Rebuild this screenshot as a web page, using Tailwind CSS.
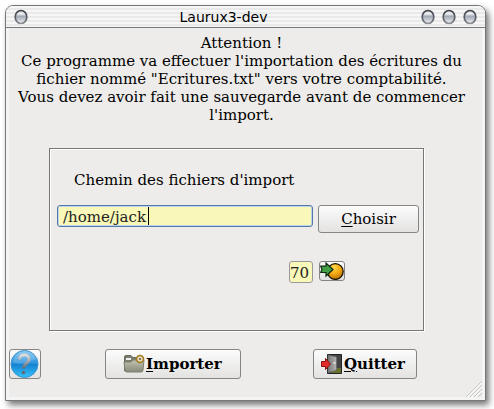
<!DOCTYPE html>
<html lang="fr">
<head>
<meta charset="utf-8">
<title>Laurux3-dev</title>
<script src="https://cdn.jsdelivr.net/npm/@tailwindcss/browser@4"></script>
</head>
<body class="bg-white min-h-screen pt-[5px] pl-[5px] pr-2 pb-2 flex flex-col font-['DejaVu_Serif',serif] text-[15px] leading-[18px] text-black">
<svg class="absolute w-0 h-0" aria-hidden="true">
  <defs>
    <linearGradient id="orbRing" x1="0" y1="0" x2="0" y2="1"><stop offset="0" stop-color="#40444c"/><stop offset=".6" stop-color="#5c6068"/><stop offset="1" stop-color="#8b8d91"/></linearGradient>
    <linearGradient id="orbFill" x1="0" y1="0" x2="0" y2="1"><stop offset="0" stop-color="#c9ccd2"/><stop offset=".25" stop-color="#f0f2f5"/><stop offset=".45" stop-color="#a4aab6"/><stop offset="1" stop-color="#edf1f6"/></linearGradient>
    <symbol id="orb" viewBox="0 0 14 16"><ellipse cx="7" cy="8.5" rx="6.6" ry="7.2" fill="#fff" opacity=".8"/><ellipse cx="7" cy="8" rx="5.8" ry="6.5" fill="url(#orbFill)" stroke="url(#orbRing)" stroke-width="1.7"/></symbol>
  </defs>
</svg>
<main class="flex-1 flex flex-col rounded-t-lg border border-[#777] bg-[#f4f4f4] shadow-[3px_4px_6px_#00000088]">
  <header class="h-[22px] shrink-0 flex items-center rounded-t-[7px] border-b border-[#777] px-2 bg-[repeating-linear-gradient(to_bottom,#f6f6f6_0px,#f6f6f6_2px,#e9e9e9_2px,#e9e9e9_4px)]">
    <div class="w-14 flex"><button aria-label="Menu" class="w-[14px] h-4"><svg class="w-[14px] h-4"><use href="#orb"/></svg></button></div>
    <h1 class="flex-1 text-center font-['DejaVu_Sans',sans-serif] text-[14px] leading-5 pr-11">Laurux3-dev</h1>
    <div class="flex gap-[7px]">
      <button aria-label="Réduire" class="w-[14px] h-4"><svg class="w-[14px] h-4"><use href="#orb"/></svg></button>
      <button aria-label="Agrandir" class="w-[14px] h-4"><svg class="w-[14px] h-4"><use href="#orb"/></svg></button>
      <button aria-label="Fermer" class="w-[14px] h-4"><svg class="w-[14px] h-4"><use href="#orb"/></svg></button>
    </div>
  </header>
  <section class="relative flex-1 flex flex-col mx-[3px] mb-[3px] bg-[#edecea] pt-[6px] pb-[18px]">
    <p class="text-center pr-2">Attention !<br>Ce programme va effectuer l'importation des écritures du<br>fichier nommé "Ecritures.txt" vers votre comptabilité.<br>Vous devez avoir fait une sauvegarde avant de commencer<br>l'import.</p>
    <div class="flex-1 mt-6 ml-10 mr-[58px] border border-[#777] shadow-[inset_1px_1px_0_#fff,1px_1px_0_#fff] pl-[7px] pr-1 pt-[22px]">
      <label for="path" class="block pl-[17px]">Chemin des fichiers d'import</label>
      <div class="mt-4 flex items-start gap-[5px]">
        <div class="relative flex-1 min-w-0">
          <input id="path" value="/home/jack" class="block w-full h-[22px] rounded-[3px] border border-[#5479a9] bg-[#f9f8b8] pl-[5px] pt-[2px] shadow-[inset_0_0_0_1px_#bcd4ec] text-[#222] outline-none">
          <span class="absolute left-[91px] top-[2px] w-px h-[18px] bg-black"></span>
        </div>
        <button class="w-[101px] h-7 rounded-[3px] border border-[#858585] bg-linear-to-b from-[#fcfcfc] to-[#e3e2e1]"><span class="underline underline-offset-2">C</span>hoisir</button>
      </div>
      <div class="mt-7 flex items-start gap-[6px] pl-[232px]">
        <input aria-label="Code" value="70" class="w-6 h-[22px] rounded-[3px] border border-[#999] bg-[#f9f8b8] pl-0 pt-px text-[#222] outline-none">
        <button aria-label="Exécuter" class="w-[26px] h-5 rounded-[3px] border border-[#858585] bg-linear-to-b from-[#fcfcfc] to-[#e3e2e1] flex items-center justify-center">
          <svg class="w-6 h-[18px] shrink-0" viewBox="0 0 24 18"><defs><radialGradient id="ball" cx=".4" cy=".25" r=".8"><stop offset="0" stop-color="#ffd84d"/><stop offset=".5" stop-color="#f5a913"/><stop offset="1" stop-color="#b36a00"/></radialGradient></defs><circle cx="15.3" cy="9.5" r="7.9" fill="url(#ball)" stroke="#181200" stroke-width="1.3"/><path d="M.7 4.2H6V1l7 6.5L6 14v-3.500H.7L2 7.500Z" fill="#42a047" stroke="#102b10" stroke-width="1.2"/></svg>
        </button>
      </div>
    </div>
    <div class="mt-[18px] flex">
      <button aria-label="Aide" class="w-8 h-[30px] rounded-[3px] border border-[#858585] bg-linear-to-b from-[#fcfcfc] to-[#e3e2e1] flex items-center justify-center">
        <svg class="w-[30px] h-7 shrink-0" viewBox="0 0 30 28"><defs><linearGradient id="blue" x1="0" y1="0" x2="0" y2="1"><stop offset="0" stop-color="#7fc4ef"/><stop offset=".48" stop-color="#2a91dc"/><stop offset=".5" stop-color="#147fd0"/><stop offset="1" stop-color="#34c3fa"/></linearGradient><linearGradient id="mark" x1="0" y1="0" x2="0" y2="1"><stop offset="0" stop-color="#ddd"/><stop offset="1" stop-color="#626971"/></linearGradient></defs><circle cx="14.5" cy="14" r="13.5" fill="url(#blue)" stroke="#3b94cf"/><path d="M3 12Q8 15 14 13T27 9A12.5 12.5 0 0 0 3 12Z" fill="#fff" opacity=".15"/><path d="M9.500 9.500C9.500 3.500 19 3.500 19 9.500C19 13.500 13.500 13 13.500 18.500" fill="none" stroke="url(#mark)" stroke-width="3"/><circle cx="13.500" cy="22.500" r="1.700" fill="#626971"/></svg>
      </button>
      <button class="ml-16 w-[136px] h-[30px] rounded-[3px] border border-[#858585] bg-linear-to-b from-[#fcfcfc] to-[#e3e2e1] flex items-center pl-[17px] gap-px font-bold">
        <svg class="w-[22px] h-5 shrink-0" viewBox="0 0 22 20"><defs><linearGradient id="folder" x1="0" y1="0" x2="0" y2="1"><stop offset="0" stop-color="#c3c4b0"/><stop offset="1" stop-color="#87897a"/></linearGradient></defs><path d="M1.500 17V3Q1.500 1.500 3 1.500H8L10 3.500H19V17Z" fill="#7b7e6e" stroke="#686b5c"/><path d="M3 4H8V6H3Z" fill="#eee"/><path d="M1 8H8L10 6H21L20 16Q20 18 18 18H4Q2 18 2 16Z" fill="url(#folder)" stroke="#7d806e"/><circle cx="17" cy="5" r="3.500" fill="#e9dfbd" stroke="#a47a24" stroke-width="1.700"/><circle cx="17" cy="5" r="1.200" fill="#8a7958"/></svg>
        <span><span class="underline underline-offset-2">I</span>mporter</span>
      </button>
      <button class="ml-[72px] w-[104px] h-[30px] rounded-[3px] border border-[#858585] bg-linear-to-b from-[#fcfcfc] to-[#e3e2e1] flex items-center pl-[7px] gap-px font-bold">
        <svg class="w-[22px] h-5 shrink-0" viewBox="0 0 22 20"><defs><linearGradient id="door"><stop offset="0" stop-color="#777"/><stop offset="1" stop-color="#b5b5b5"/></linearGradient></defs><path d="M6.500.5H20.500V19.500H6.500Z" fill="#444" stroke="#222"/><path d="M10 19L16 14H20V19Z" fill="#68702d"/><path d="M7 1L15.500 3V16L7 19Z" fill="url(#door)" stroke="#666" stroke-width=".6"/><circle cx="13.500" cy="9" r="1" fill="#eee"/><path d="M.5 7.500H4.500V4.500L9.500 10L4.500 15.500V12.500H.5Z" fill="#e22c2c" stroke="#8d1010"/></svg>
        <span><span class="underline underline-offset-2">Q</span>uitter</span>
      </button>
    </div>
    <svg class="absolute right-0 bottom-0 w-4 h-4" viewBox="0 0 16 16" aria-hidden="true"><path d="M0 16L16 0M4 16L16 4M8 16L16 8M12 16L16 12" stroke="#c6c6c4"/><path d="M1.500 16L16 1.500M5.500 16L16 5.500M9.500 16L16 9.500" stroke="#fff"/></svg>
  </section>
</main>
</body>
</html>
